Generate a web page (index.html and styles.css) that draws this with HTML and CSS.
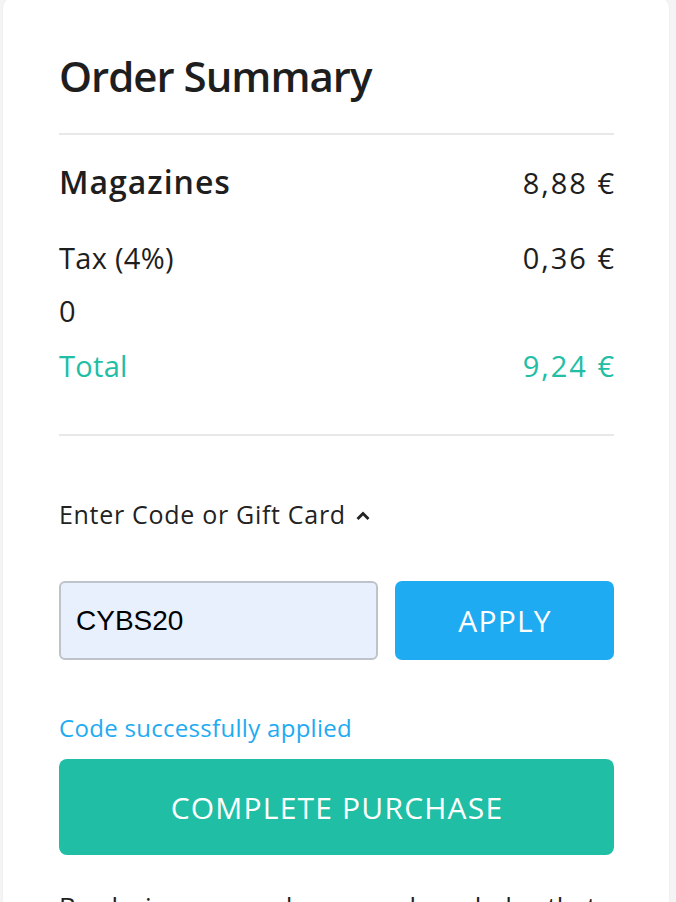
FILE: index.html
```html
<!DOCTYPE html>
<html>
<head>
<meta charset="utf-8">
<link rel="stylesheet" href="styles.css">
</head>
<body>
<div class="card">
  <h1 class="title">Order Summary</h1>
  <div class="divider"></div>
  <div class="row item">
    <span>Magazines</span>
    <span class="amount">8,88 €</span>
  </div>
  <div class="row tax">
    <span>Tax (4%)</span>
    <span class="amount">0,36 €</span>
  </div>
  <div class="row zero"><span>0</span></div>
  <div class="row total">
    <span>Total</span>
    <span class="amount">9,24 €</span>
  </div>
  <div class="divider divider-lower"></div>
  <div class="code-toggle">
    <span>Enter Code or Gift Card</span>
    <svg class="chev" width="16" height="11" viewBox="0 0 16 11"><path d="M2.5 9 L8 3.5 L13.5 9" fill="none" stroke="#222" stroke-width="2.8"/></svg>
  </div>
  <div class="code-form">
    <input class="code-input" type="text" value="CYBS20">
    <button class="apply">APPLY</button>
  </div>
  <p class="success">Code successfully applied</p>
  <button class="purchase">COMPLETE PURCHASE</button>
  <p class="legal">By placing your order, you acknowledge that</p>
</div>
</body>
</html>
```

FILE: styles.css
```css
html, body {
  margin: 0;
  padding: 0;
  background: #f4f4f4;
  font-family: "Open Sans", "Lato", sans-serif;
  color: #1e1e1e;
  overflow: hidden;
}
.card {
  margin: -2px 7px 0 3px;
  background: #fff;
  border-radius: 10px;
  padding: 56px 55px 40px 56px;
  height: 1000px;
  box-shadow: 0 0 3px rgba(0,0,0,0.04);
}
.title {
  margin: 0;
  font-size: 42px;
  font-weight: 600;
  line-height: 44px;
  letter-spacing: -1px;
}
.divider {
  height: 2px;
  background: #e8e8e8;
  margin-top: 35px;
}
.row {
  display: flex;
  justify-content: space-between;
  align-items: baseline;
  font-size: 29px;
  line-height: 36px;
  letter-spacing: 0.3px;
}
.amount {
  letter-spacing: 2px;
  margin-right: -2px;
}
.item {
  margin-top: 27px;
  font-size: 32px;
  line-height: 40px;
  font-weight: 600;
  letter-spacing: 1px;
}
.item .amount { font-weight: 400; font-size: 29px; letter-spacing: 2px; }
.tax { margin-top: 37px; }
.zero { margin-top: 17px; }
.total { margin-top: 19px; color: #21bea5; }
.divider-lower { margin-top: 50px; }
.code-toggle {
  margin-top: 62px;
  font-size: 25px;
  line-height: 32px;
  color: #222;
  display: flex;
  align-items: center;
  gap: 9px;
  letter-spacing: 0.7px;
}
.chev { margin-top: 2px; }
.code-form {
  display: flex;
  gap: 17px;
  margin-top: 51px;
}
.code-input {
  box-sizing: border-box;
  width: 319px;
  height: 79px;
  border: 2px solid #bec2ca;
  border-radius: 6px;
  background: #e8f0fe;
  padding: 0 15px;
  font-family: "Liberation Sans", Arial, sans-serif;
  font-size: 28px;
  color: #000;
  outline: none;
}
.apply {
  flex: 1;
  height: 79px;
  border: none;
  border-radius: 7px;
  background: #1eabf1;
  color: #fff;
  font-family: "Open Sans", sans-serif;
  font-size: 30px;
  letter-spacing: 1.2px;
  padding: 0 0 0 1px;
}
.success {
  margin: 53px 0 0;
  font-size: 24px;
  line-height: 30px;
  color: #1eabf1;
  letter-spacing: 0.3px;
}
.purchase {
  display: block;
  width: 100%;
  height: 96px;
  margin-top: 16px;
  border: none;
  border-radius: 8px;
  background: #20bfa5;
  color: #fff;
  font-family: "Open Sans", sans-serif;
  font-size: 30px;
  letter-spacing: 1.2px;
  padding: 0 0 0 1px;
}
.legal {
  margin: 34px 0 0;
  font-size: 26px;
  line-height: 34px;
  white-space: nowrap;
}
```
